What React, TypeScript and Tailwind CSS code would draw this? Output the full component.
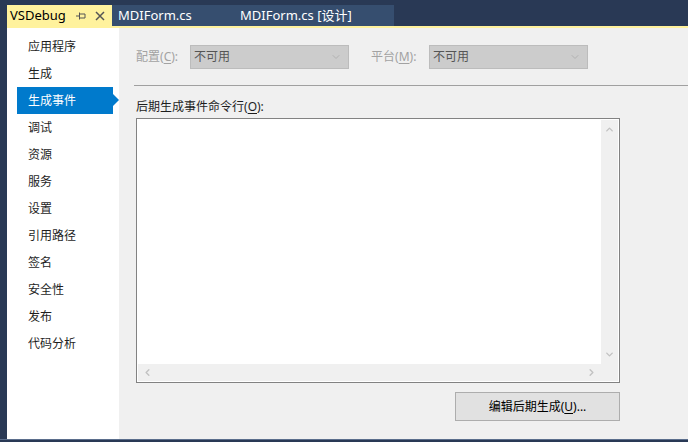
import { ChevronDown, ChevronUp, ChevronLeft, ChevronRight } from "lucide-react";

const font = { fontFamily: '"Noto Sans", "Noto Sans CJK SC", sans-serif' };

const navItems = [
  "应用程序",
  "生成",
  "生成事件",
  "调试",
  "资源",
  "服务",
  "设置",
  "引用路径",
  "签名",
  "安全性",
  "发布",
  "代码分析",
];

function Mnemonic({ text, letter }: { text: string; letter: string }) {
  return (
    <span>
      {text}(<span className="underline underline-offset-2">{letter}</span>)
    </span>
  );
}

function Dropdown({ width }: { width: string }) {
  return (
    <div
      className={`${width} h-[24px] bg-[#cccccc] border border-[#bcbcbc] flex items-center pl-[3px] pr-[6px] text-[12px] text-[#555555]`}
    >
      <span className="flex-1 leading-none">不可用</span>
      <ChevronDown className="w-[12px] h-[12px] text-[#a8a8a8]" strokeWidth={1.5} />
    </div>
  );
}

export default function App() {
  return (
    <div
      className="w-[688px] h-[442px] bg-[#293955] flex flex-col overflow-hidden"
      style={font}
    >
      {/* tab strip */}
      <div className="h-[26px] flex items-end pl-[7px]">
        <div className="h-[21px] w-[105px] bg-[#fff29d] flex items-center pl-[3px] text-[13px] text-black">
          <span className="leading-none">VSDebug</span>
          <svg className="ml-[10px] w-[10px] h-[10px]" viewBox="0 0 10 10">
            <path d="M0 5 H3 M3.5 1.5 V8.5 M3.5 3 H9 V7 H3.5" stroke="#555" strokeWidth="1" fill="none" />
          </svg>
          <svg className="ml-[9px] w-[10px] h-[10px]" viewBox="0 0 10 10">
            <path d="M1 1 L9 9 M9 1 L1 9" stroke="#555" strokeWidth="1.5" />
          </svg>
        </div>
        <div className="h-[21px] w-[282px] bg-[#364e6f] flex items-center text-[13px] text-white">
          <span className="pl-[6px] w-[128px] leading-none">MDIForm.cs</span>
          <span className="leading-none">MDIForm.cs [设计]</span>
        </div>
      </div>
      <div className="h-[2px] ml-[7px] bg-[#fff29d]" />

      {/* body */}
      <div className="flex ml-[7px] h-[411px]">
        <div className="w-[112px] bg-white pt-[5px]">
          {navItems.map((item) => {
            const active = item === "生成事件";
            return (
              <div key={item} className="relative ml-[10px] w-[96px] h-[27px]">
                <div
                  className={`h-full flex items-center pl-[11px] text-[12px] ${
                    active ? "bg-[#007acc] text-white" : "text-[#1e1e1e]"
                  }`}
                >
                  {item}
                </div>
                {active && (
                  <div className="absolute right-[-6px] top-[7px] w-0 h-0 border-y-[6px] border-y-transparent border-l-[6px] border-l-[#007acc]" />
                )}
              </div>
            );
          })}
        </div>

        <div className="flex-1 bg-[#f0f0f0] flex flex-col pt-[17px] text-[12px]">
          <div className="flex items-center pl-[17px]">
            <span className="w-[54px] text-[#a2a2a2]">
              <Mnemonic text="配置" letter="C" />:
            </span>
            <Dropdown width="w-[159px]" />
            <span className="ml-[22px] w-[58px] text-[#a2a2a2]">
              <Mnemonic text="平台" letter="M" />:
            </span>
            <Dropdown width="w-[159px]" />
          </div>

          <div className="mt-[16px] ml-[15px] h-px bg-[#a0a0a0]" />

          <div className="mt-[14px] pl-[17px] text-[#1e1e1e] leading-[14px]">
            <Mnemonic text="后期生成事件命令行" letter="O" />:
          </div>

          <div className="mt-[4px] ml-[17px] w-[484px] h-[265px] border border-[#828282] bg-white p-px flex flex-col">
            <div className="flex flex-1">
              <div className="flex-1 bg-white" />
              <div className="w-[17px] bg-[#f0f0f0] flex flex-col items-center justify-between py-[4px]">
                <ChevronUp className="w-[11px] h-[11px] text-[#c2c2c2]" strokeWidth={3} />
                <ChevronDown className="w-[11px] h-[11px] text-[#c2c2c2]" strokeWidth={3} />
              </div>
            </div>
            <div className="h-[17px] bg-[#f0f0f0] flex items-center">
              <div className="flex-1 flex items-center justify-between px-[4px]">
                <ChevronLeft className="w-[11px] h-[11px] text-[#c2c2c2]" strokeWidth={3} />
                <ChevronRight className="w-[11px] h-[11px] text-[#c2c2c2]" strokeWidth={3} />
              </div>
              <div className="w-[17px]" />
            </div>
          </div>

          <div className="mt-[9px] ml-[336px] w-[165px] h-[29px] bg-[#e1e1e1] border border-[#adadad] flex items-center justify-center text-black">
            <Mnemonic text="编辑后期生成" letter="U" />
            ...
          </div>
        </div>
      </div>

      <div className="h-px bg-[#5b6e8c]" />
    </div>
  );
}
